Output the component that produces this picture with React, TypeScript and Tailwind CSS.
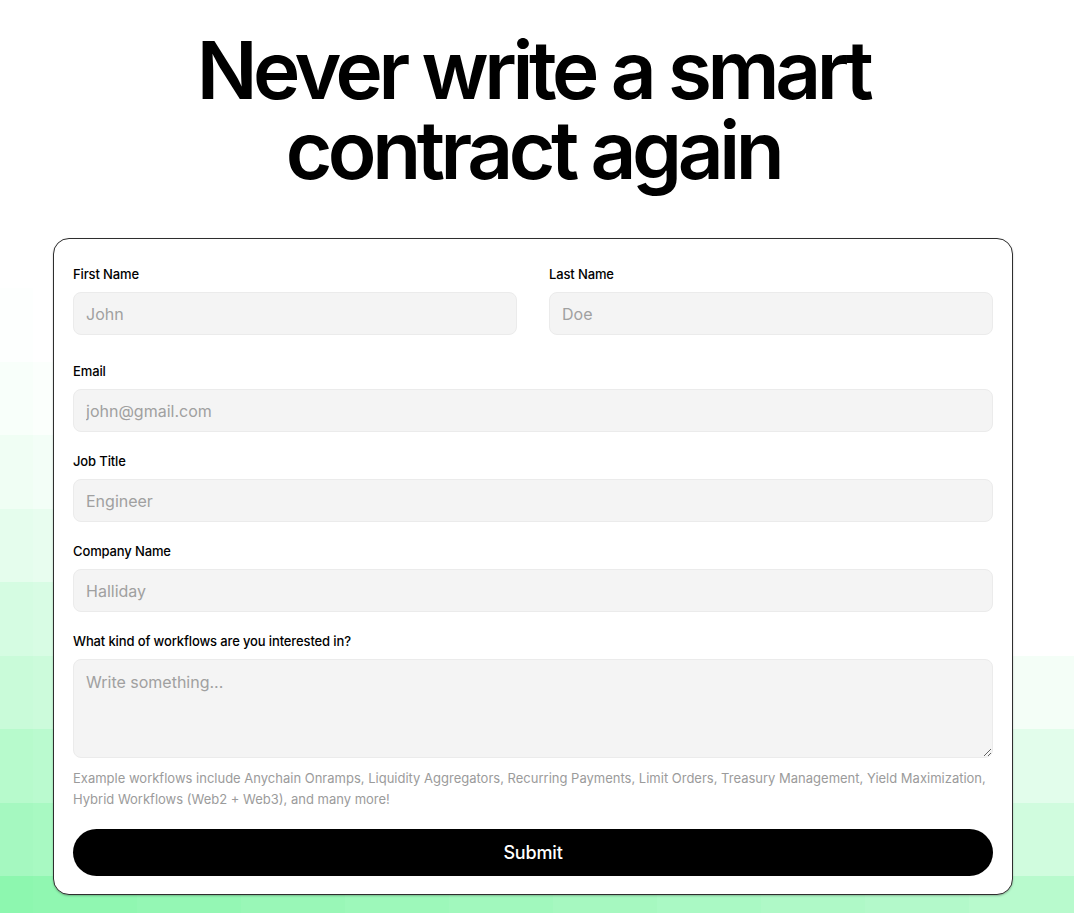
import React from 'react';

const ROW_BASE = [0.02, 0.06, 0.13, 0.22, 0.35, 0.45, 0.6, 0.75, 0.95];
const COL_EDGES = [0, 33, 137, 241, 345, 449, 553, 657, 761, 865, 969, 1074];

function cellColor(row: number, col: number) {
  const cx = (COL_EDGES[col] + COL_EDGES[col + 1]) / 2 / 1074;
  const t = Math.max(0, Math.min(1, ROW_BASE[row] - 0.38 * cx));
  const mix = (c: number) => Math.round(255 - t * (255 - c));
  return `rgb(${mix(134)}, ${mix(246)}, ${mix(170)})`;
}

function PixelBackdrop() {
  return (
    <div
      aria-hidden
      className="absolute inset-0 grid grid-cols-[33px_repeat(9,104px)_1fr] grid-rows-[288px_repeat(8,73.5px)_1fr]"
    >
      {Array.from({ length: 11 }).map((_, c) => (
        <div key={`top-${c}`} className="bg-white" />
      ))}
      {ROW_BASE.map((_, r) =>
        Array.from({ length: 11 }).map((_, c) => (
          <div key={`${r}-${c}`} style={{ backgroundColor: cellColor(r, c) }} />
        )),
      )}
    </div>
  );
}

function Field({ label, placeholder, className = '' }: { label: string; placeholder: string; className?: string }) {
  return (
    <label className={`flex flex-col ${className}`}>
      <span className="text-[13px] leading-4 font-medium text-black tracking-[-0.01em]">{label}</span>
      <input
        placeholder={placeholder}
        className="mt-[10px] h-[43px] rounded-lg border border-[#ebebeb] bg-[#f4f4f4] px-3 text-[16px] text-black placeholder:text-[#a0a0a0] outline-none"
      />
    </label>
  );
}

export default function App() {
  return (
    <div className="relative min-h-screen overflow-hidden bg-white font-['Inter',sans-serif]">
      <PixelBackdrop />
      <div className="relative flex flex-col items-center pr-[8px]">
        <h1 className="pt-[30px] text-center text-[80px] leading-[80px] font-semibold tracking-[-0.055em] text-black">
          Never write a smart
          <br />
          contract again
        </h1>

        <form
          className="mt-[48px] mb-[18px] w-[960px] rounded-2xl border border-[#2e2e2e] bg-white px-[19px] pt-[27px] pb-[18px] shadow-[0_1px_2px_rgba(0,0,0,0.25)]"
          onSubmit={(e) => e.preventDefault()}
        >
          <div className="grid grid-cols-2 gap-8">
            <Field label="First Name" placeholder="John" />
            <Field label="Last Name" placeholder="Doe" />
          </div>
          <Field className="mt-[28px]" label="Email" placeholder="john@gmail.com" />
          <Field className="mt-[21px]" label="Job Title" placeholder="Engineer" />
          <Field className="mt-[21px]" label="Company Name" placeholder="Halliday" />

          <label className="mt-[21px] flex flex-col">
            <span className="text-[13px] leading-4 font-medium text-black tracking-[-0.01em]">
              What kind of workflows are you interested in?
            </span>
            <textarea
              placeholder="Write something..."
              className="mt-[10px] h-[99px] rounded-lg border border-[#ebebeb] bg-[#f4f4f4] px-3 py-[10px] text-[16px] text-black placeholder:text-[#a0a0a0] outline-none"
            />
          </label>

          <p className="mt-[10px] text-[13px] leading-[21px] text-[#9b9b9b] tracking-normal">
            Example workflows include Anychain Onramps, Liquidity Aggregators, Recurring Payments, Limit Orders, Treasury
            Management, Yield Maximization, Hybrid Workflows (Web2 + Web3), and many more!
          </p>

          <button
            type="submit"
            className="mt-[19px] h-[47px] w-full rounded-full bg-black text-[18px] font-medium text-white tracking-[-0.01em]"
          >
            Submit
          </button>
        </form>
      </div>
    </div>
  );
}
